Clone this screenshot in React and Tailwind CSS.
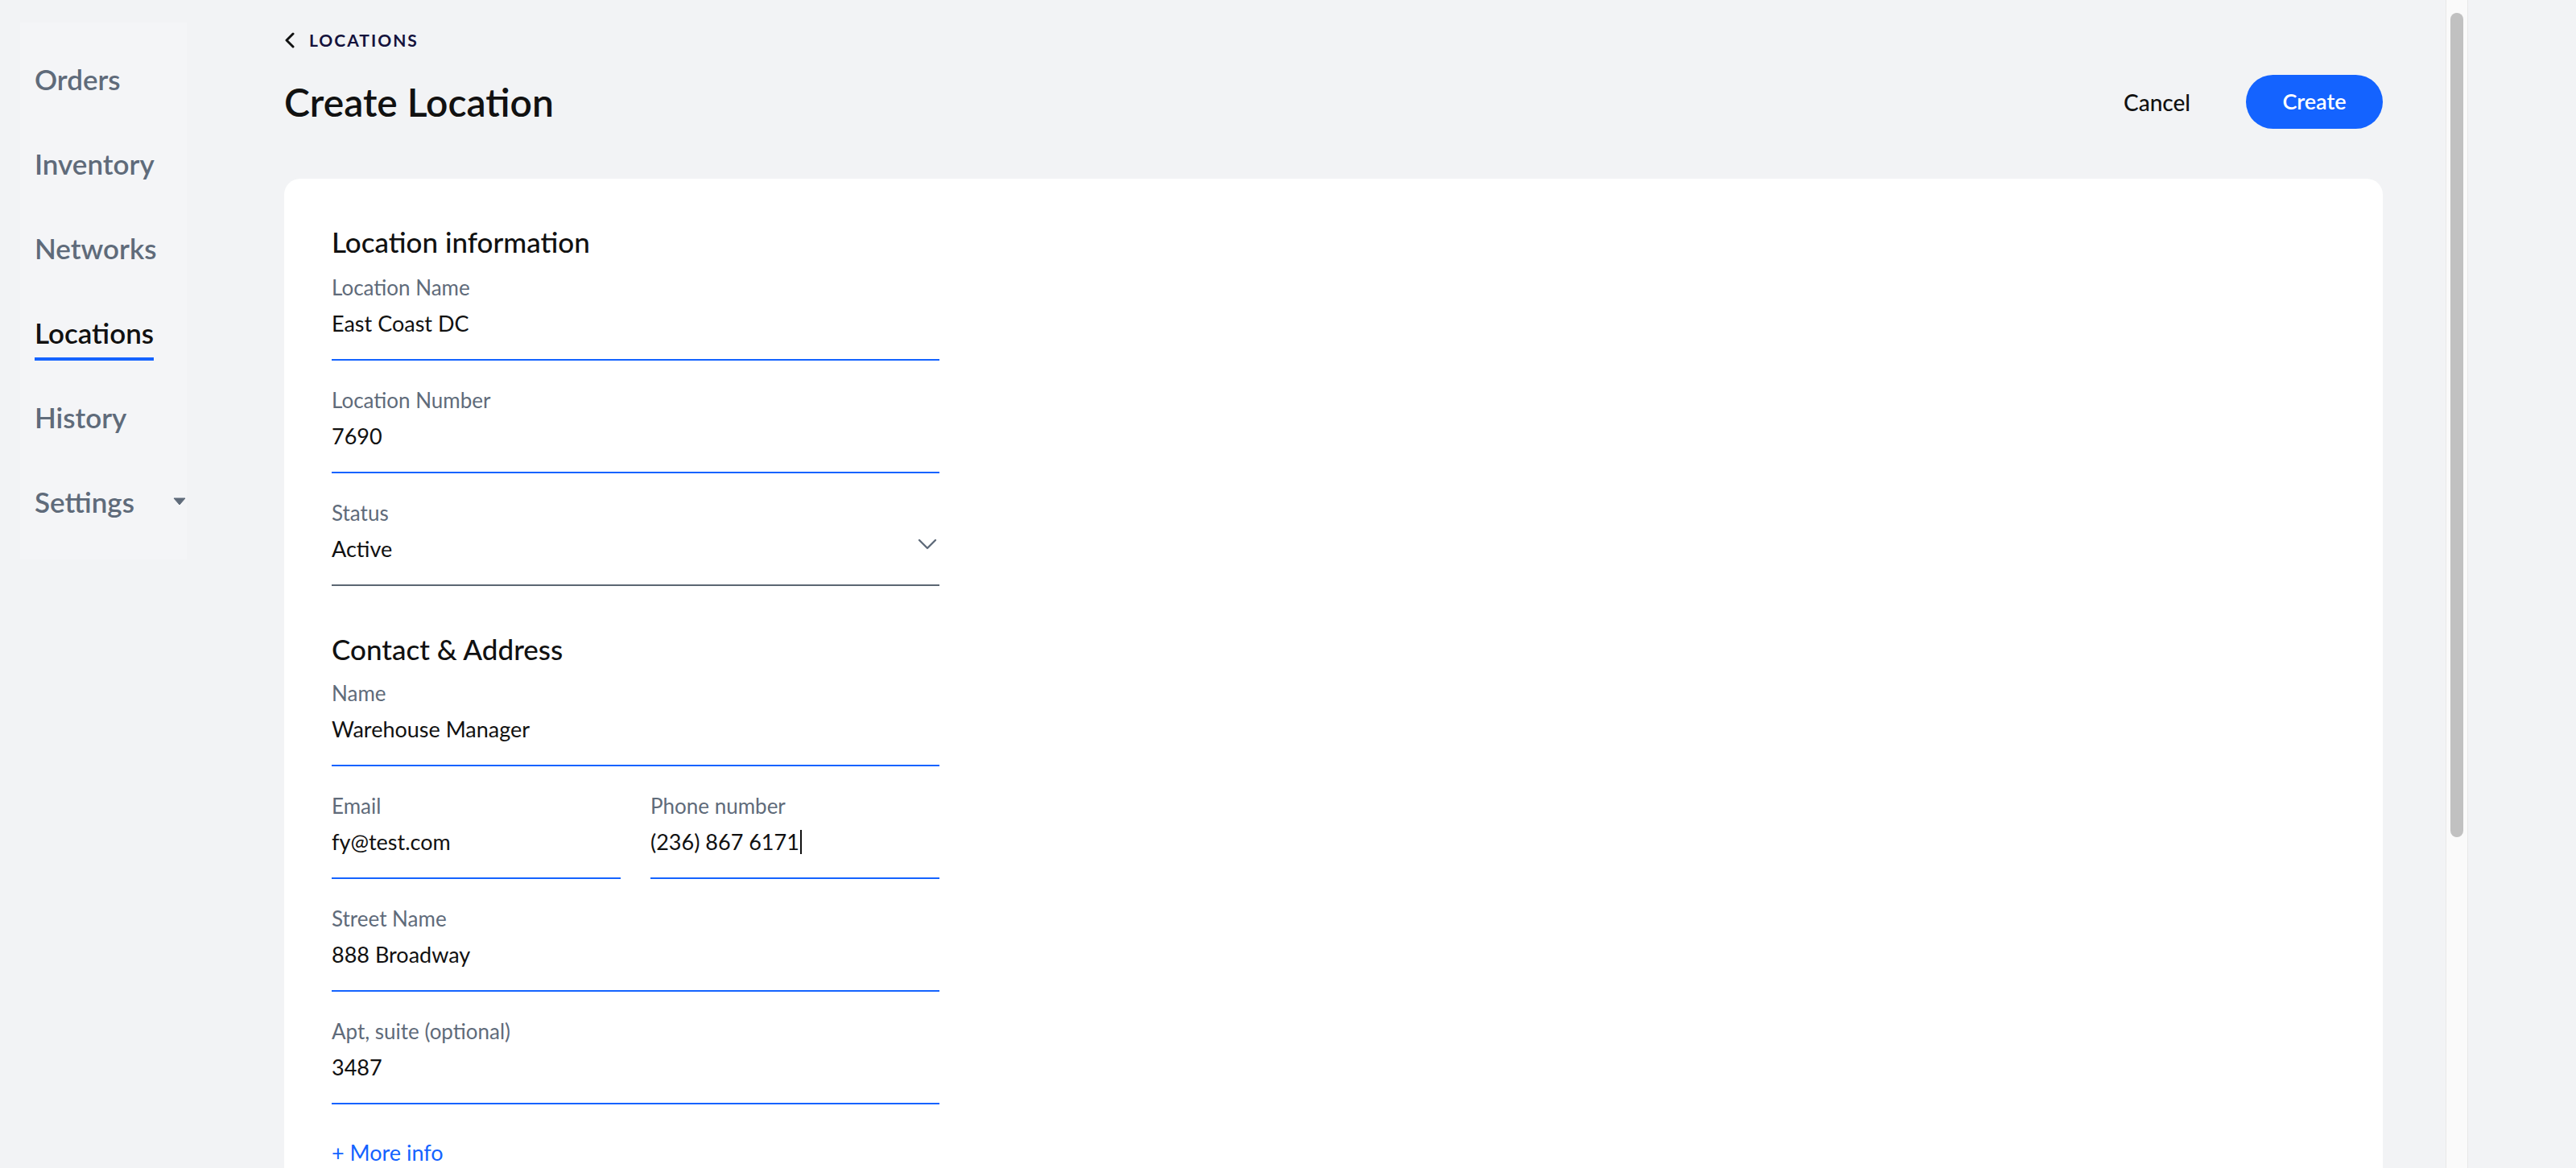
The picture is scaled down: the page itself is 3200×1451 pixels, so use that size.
import React from 'react';

const navItems = ['Orders', 'Inventory', 'Networks', 'Locations', 'History', 'Settings'];

const Field = ({ label, value, line = 'blue', caret, chevron, className = '' }) => (
  <div
    className={`pb-[26px] border-b-2 ${line === 'blue' ? 'border-[#1463ff]' : 'border-[#5b6672]'} ${className}`}
  >
    <div className="h-[32px] leading-[32px] text-[26px] text-[#5f6b7a]">{label}</div>
    <div className="mt-[11px] h-[36px] leading-[36px] text-[27px] text-[#111111] flex items-center justify-between">
      <span className="flex items-center">
        {value}
        {caret && <span className="inline-block w-[2px] h-[30px] bg-[#111111] ml-[1px]" />}
      </span>
      {chevron && (
        <svg width="24" height="14" viewBox="0 0 24 14" className="mr-[3px] -mt-[12px]" fill="none">
          <path d="M2 2 L12 12 L22 2" stroke="#5f6b7a" strokeWidth="2.4" strokeLinecap="round" strokeLinejoin="round" />
        </svg>
      )}
    </div>
  </div>
);

const Sidebar = () => (
  <div className="mt-[28px] ml-[25px] w-[207px] h-[667px] bg-[#f4f5f7] pt-[50px] pl-[18px] flex flex-col gap-[65px]">
    {navItems.map((item) => (
      <div key={item} className="h-[40px] flex items-center justify-between">
        <span
          className={`relative text-[35px] leading-[40px] font-semibold ${
            item === 'Locations' ? 'text-[#111111]' : 'text-[#5f6b7a]'
          }`}
        >
          {item}
          {item === 'Locations' && (
            <span className="absolute left-0 right-0 top-[51px] h-[4px] bg-[#1463ff]" />
          )}
        </span>
        {item === 'Settings' && (
          <svg width="16" height="10" viewBox="0 0 16 10" className="mr-[1px]">
            <path d="M1 1 L15 1 L8 9 Z" fill="#5f6b7a" stroke="#5f6b7a" strokeWidth="1" strokeLinejoin="round" />
          </svg>
        )}
      </div>
    ))}
  </div>
);

export default function App() {
  return (
    <div
      className="w-[3200px] h-[1451px] overflow-hidden bg-[#f2f3f5] flex"
      style={{ fontFamily: 'Lato, "Noto Sans", sans-serif' }}
    >
      <div className="w-[3038px] flex">
        <Sidebar />

        {/* Main content */}
        <div className="ml-[121px] w-[2607px] flex flex-col">
          <div className="mt-[37px] h-[26px] flex items-center">
            <svg width="14" height="20" viewBox="0 0 14 20" fill="none">
              <path d="M11 2 L3 10 L11 18" stroke="#111111" strokeWidth="3" strokeLinecap="round" strokeLinejoin="round" />
            </svg>
            <span className="ml-[17px] text-[21px] font-bold tracking-[2px] text-[#14123c]">LOCATIONS</span>
          </div>

          <div className="mt-[30px] h-[68px] flex items-center justify-between">
            <h1 className="text-[48px] leading-[56px] font-semibold text-[#111111]">Create Location</h1>
            <div className="flex items-center">
              <button className="text-[28px] text-[#111111] font-medium mr-[69px]">Cancel</button>
              <button className="w-[170px] h-[67px] rounded-full bg-[#1463ff] text-white text-[27px] font-semibold">
                Create
              </button>
            </div>
          </div>

          <div className="mt-[62px] bg-white rounded-[20px] pl-[59px] pt-[58px] pb-[200px]">
            <div className="w-[755px]">
              <h2 className="h-[40px] leading-[40px] text-[35px] font-medium text-[#111111]">Location information</h2>
              <Field className="mt-[21px]" label="Location Name" value="East Coast DC" />
              <Field className="mt-[33px]" label="Location Number" value="7690" />
              <Field className="mt-[33px]" label="Status" value="Active" line="gray" chevron />

              <h2 className="mt-[58px] h-[40px] leading-[40px] text-[35px] font-medium text-[#111111]">Contact &amp; Address</h2>
              <Field className="mt-[19px]" label="Name" value="Warehouse Manager" />
              <div className="mt-[33px] grid grid-cols-2 gap-[37px]">
                <Field label="Email" value="fy@test.com" />
                <Field label="Phone number" value="(236) 867 6171" caret />
              </div>
              <Field className="mt-[33px]" label="Street Name" value="888 Broadway" />
              <Field className="mt-[33px]" label="Apt, suite (optional)" value="3487" />

              <div className="mt-[44px] h-[32px] leading-[32px] text-[27px] text-[#1463ff]">+ More info</div>
            </div>
          </div>
        </div>
      </div>

      {/* Scrollbar */}
      <div className="w-[28px] h-full bg-[#fafafa] border-l border-r border-[#e8e8e8] flex justify-center pt-[16px]">
        <div className="w-[16px] h-[1024px] rounded-full bg-[#c1c1c1]" />
      </div>
    </div>
  );
}
